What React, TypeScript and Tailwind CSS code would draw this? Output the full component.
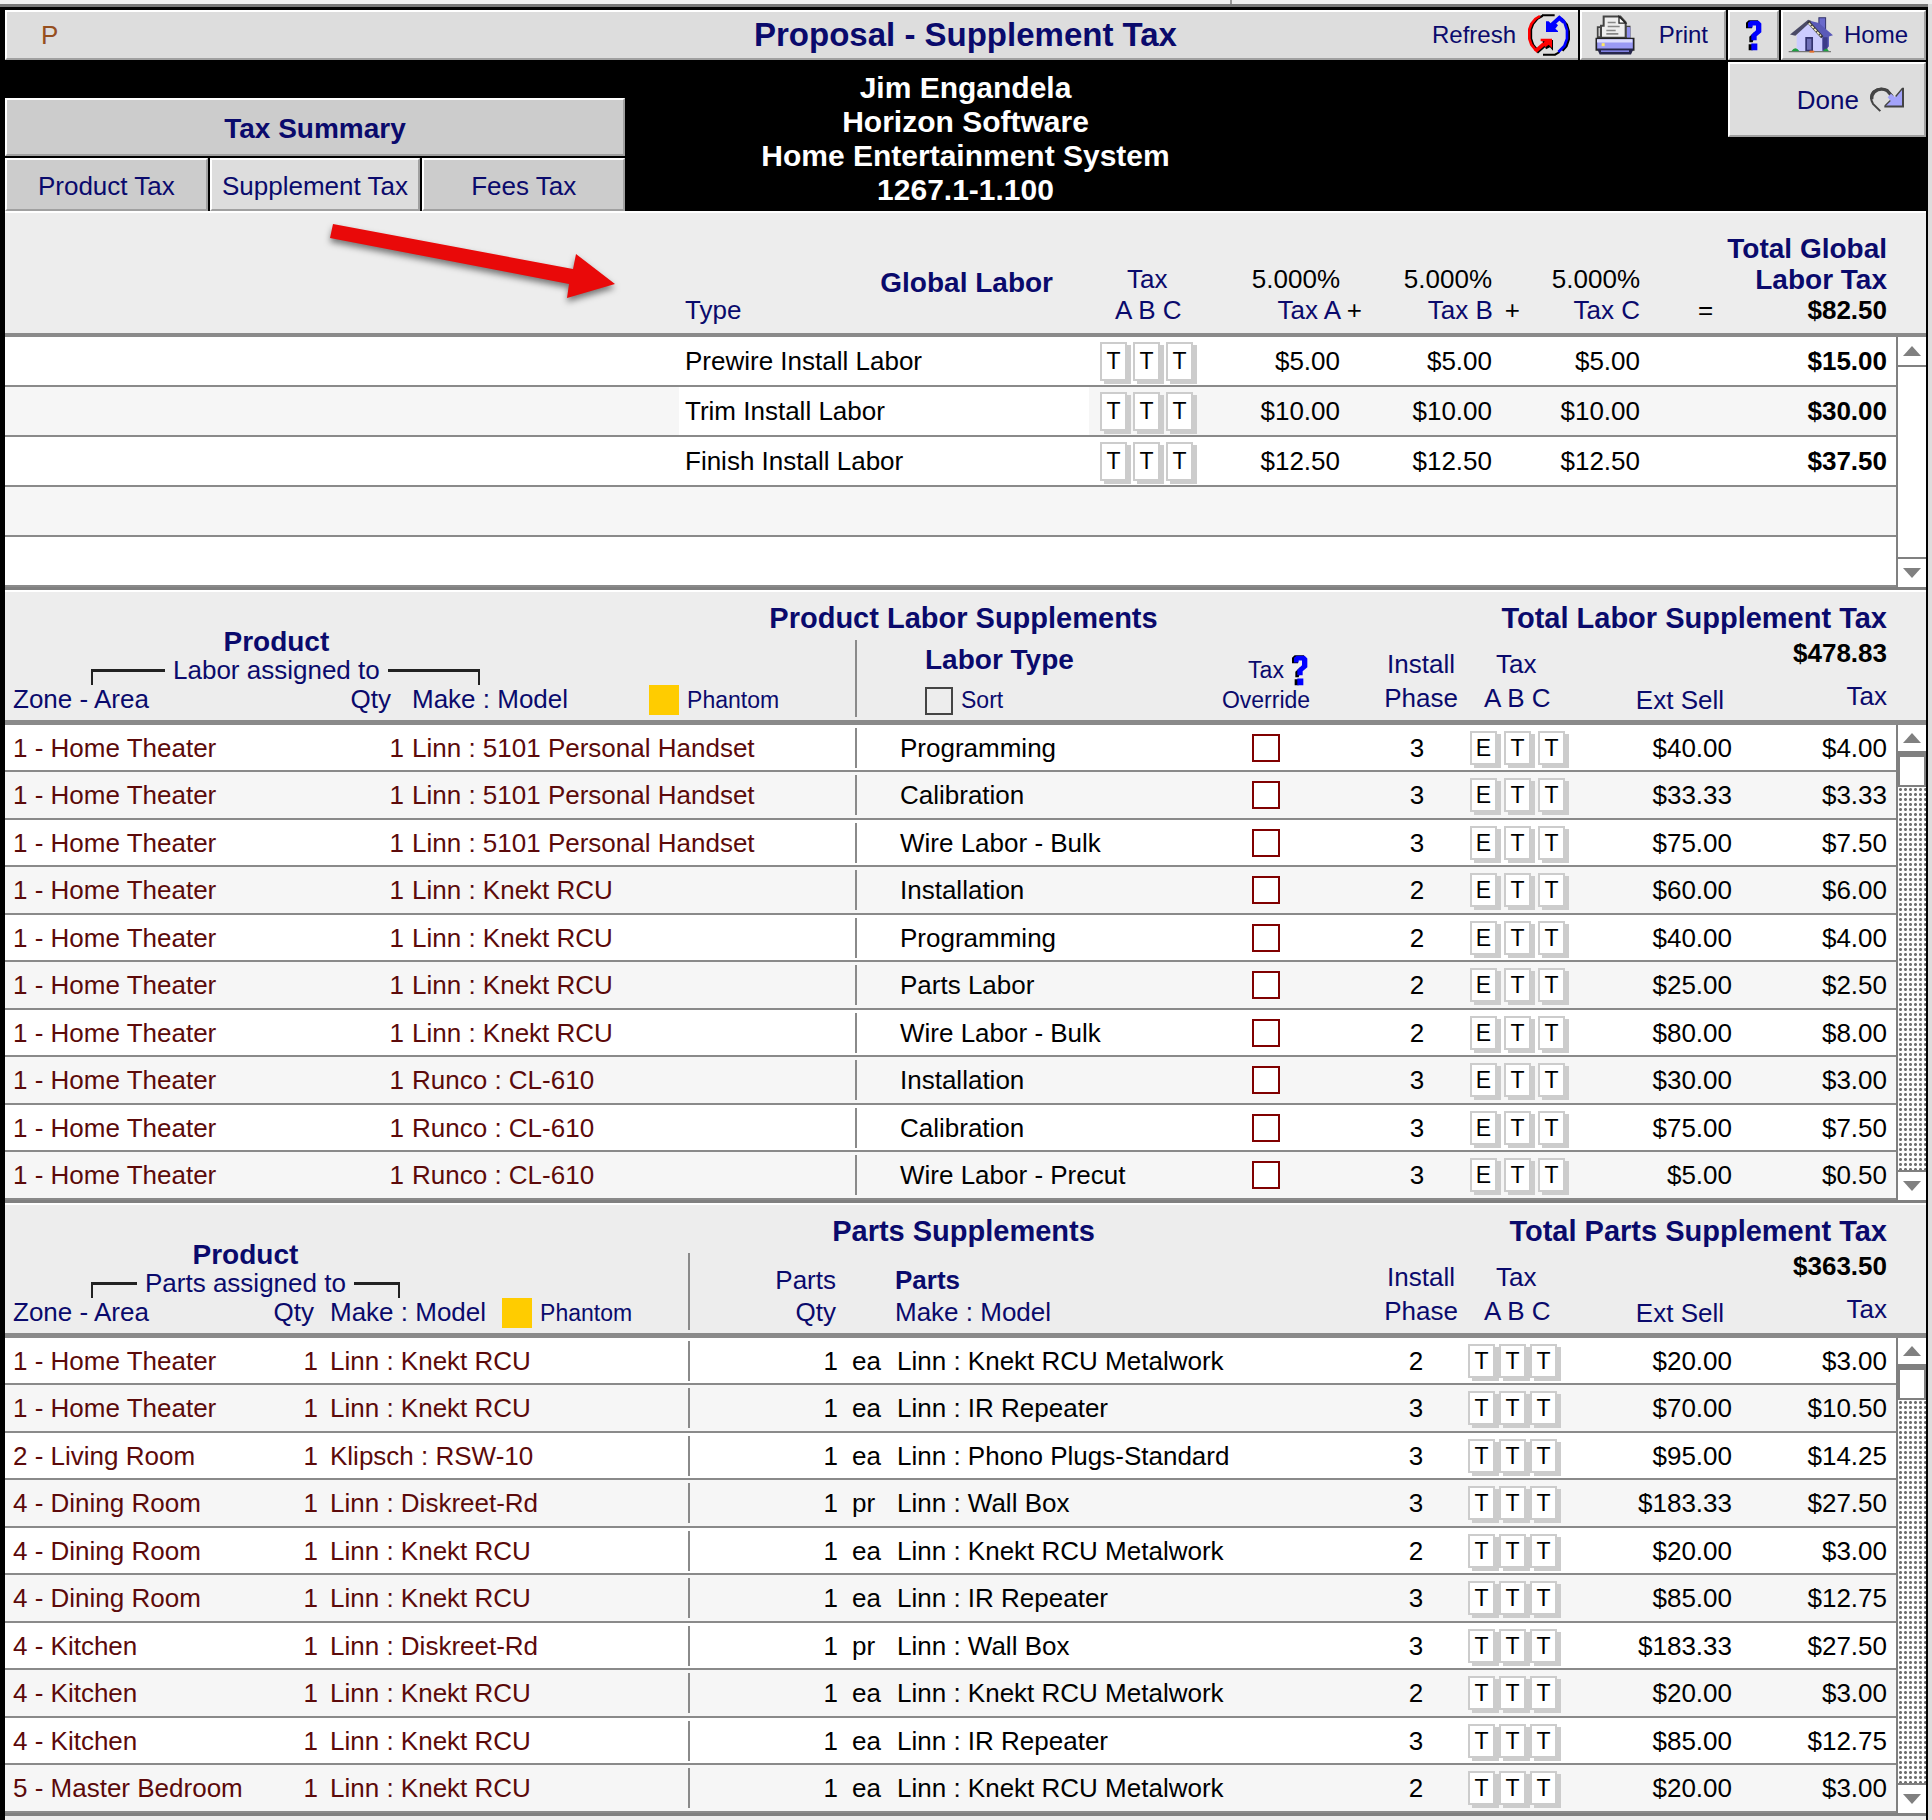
import clsx from 'clsx';
import React, { useState } from 'react';

interface GlobalLabor {
  type: string;
  amount: string;
  total: string;
}

interface LaborSupplement {
  zone: string;
  model: string;
  labor: string;
  phase: number;
  sell: string;
  tax: string;
}

interface PartsSupplement {
  zone: string;
  model: string;
  unit: string;
  part: string;
  phase: number;
  sell: string;
  tax: string;
}

const globalLabor: GlobalLabor[] = [
  { type: 'Prewire Install Labor', amount: '$5.00', total: '$15.00' },
  { type: 'Trim Install Labor', amount: '$10.00', total: '$30.00' },
  { type: 'Finish Install Labor', amount: '$12.50', total: '$37.50' },
];

const HT = '1 - Home Theater';
const HANDSET = 'Linn : 5101 Personal Handset';
const RCU = 'Linn : Knekt RCU';
const RUNCO = 'Runco : CL-610';
const METALWORK = 'Linn : Knekt RCU Metalwork';

const laborSupplements: LaborSupplement[] = [
  { zone: HT, model: HANDSET, labor: 'Programming', phase: 3, sell: '$40.00', tax: '$4.00' },
  { zone: HT, model: HANDSET, labor: 'Calibration', phase: 3, sell: '$33.33', tax: '$3.33' },
  { zone: HT, model: HANDSET, labor: 'Wire Labor - Bulk', phase: 3, sell: '$75.00', tax: '$7.50' },
  { zone: HT, model: RCU, labor: 'Installation', phase: 2, sell: '$60.00', tax: '$6.00' },
  { zone: HT, model: RCU, labor: 'Programming', phase: 2, sell: '$40.00', tax: '$4.00' },
  { zone: HT, model: RCU, labor: 'Parts Labor', phase: 2, sell: '$25.00', tax: '$2.50' },
  { zone: HT, model: RCU, labor: 'Wire Labor - Bulk', phase: 2, sell: '$80.00', tax: '$8.00' },
  { zone: HT, model: RUNCO, labor: 'Installation', phase: 3, sell: '$30.00', tax: '$3.00' },
  { zone: HT, model: RUNCO, labor: 'Calibration', phase: 3, sell: '$75.00', tax: '$7.50' },
  { zone: HT, model: RUNCO, labor: 'Wire Labor - Precut', phase: 3, sell: '$5.00', tax: '$0.50' },
];

const partsSupplements: PartsSupplement[] = [
  { zone: HT, model: RCU, unit: 'ea', part: METALWORK, phase: 2, sell: '$20.00', tax: '$3.00' },
  { zone: HT, model: RCU, unit: 'ea', part: 'Linn : IR Repeater', phase: 3, sell: '$70.00', tax: '$10.50' },
  { zone: '2 - Living Room', model: 'Klipsch : RSW-10', unit: 'ea', part: 'Linn : Phono Plugs-Standard', phase: 3, sell: '$95.00', tax: '$14.25' },
  { zone: '4 - Dining Room', model: 'Linn : Diskreet-Rd', unit: 'pr', part: 'Linn : Wall Box', phase: 3, sell: '$183.33', tax: '$27.50' },
  { zone: '4 - Dining Room', model: RCU, unit: 'ea', part: METALWORK, phase: 2, sell: '$20.00', tax: '$3.00' },
  { zone: '4 - Dining Room', model: RCU, unit: 'ea', part: 'Linn : IR Repeater', phase: 3, sell: '$85.00', tax: '$12.75' },
  { zone: '4 - Kitchen', model: 'Linn : Diskreet-Rd', unit: 'pr', part: 'Linn : Wall Box', phase: 3, sell: '$183.33', tax: '$27.50' },
  { zone: '4 - Kitchen', model: RCU, unit: 'ea', part: METALWORK, phase: 2, sell: '$20.00', tax: '$3.00' },
  { zone: '4 - Kitchen', model: RCU, unit: 'ea', part: 'Linn : IR Repeater', phase: 3, sell: '$85.00', tax: '$12.75' },
  { zone: '5 - Master Bedroom', model: RCU, unit: 'ea', part: METALWORK, phase: 2, sell: '$20.00', tax: '$3.00' },
];

const bevel = 'border-2 border-t-white border-l-white border-r-[#a0a0a0] border-b-[#a0a0a0]';
const tableClass = 'min-w-0 flex-1 table-fixed border-separate border-spacing-0 whitespace-nowrap';
const rowClass =
  'odd:h-[47px] odd:bg-white even:h-[48px] even:bg-[#f6f6f6] *:border-b-2 *:border-[#8a8a8a]';

const RefreshIcon = () => (
  <svg className="h-[42px] w-[42px]" viewBox="0 0 126 126" fill="none" aria-hidden="true">
    <path d="M44 5 28 14 15 30 9 46v28l6 18 13 17" stroke="#000" strokeWidth="7" />
    <path d="M36 6 22 15 10 30 4 46v28l6 18 14 17" stroke="#f00" strokeWidth="8" />
    <path d="M26 114 56 88" stroke="#000" strokeWidth="12" />
    <path d="M22 112 54 84" stroke="#f00" strokeWidth="11" />
    <path d="M42 78h33v32l-9-10-12 6z" fill="#000" />
    <path d="M38 74h34v28l-10-10-10 8-8-10 6-8H38z" fill="#f00" />
    <path d="M42 4h38M45 122h36l14-8" stroke="#000" strokeWidth="6" />
    <path d="m100 14 16 18 6 20v24l-7 20-12 14" stroke="#000" strokeWidth="8" />
    <path d="m93 10 16 14 8 24v26l-8 22-18 18" stroke="#00f" strokeWidth="8" />
    <path d="M108 24 94 12 70 34" stroke="#00f" strokeWidth="12" />
    <path d="M54 22h8l10 10 8-8 10 10-8 10 8 7v3H54z" fill="#00f" />
  </svg>
);

const PrinterIcon = () => (
  <svg className="h-[41px] w-10" viewBox="0 0 120 122" aria-hidden="true">
    <path d="M8 36h14v30H8zM92 34h12v34H92z" fill="#c9c9c9" stroke="#444" strokeWidth="5" />
    <path d="M96 36h10v32H96z" fill="#8f8ff0" />
    <path d="M26 4h50l16 18v46H18V32h8z" fill="#eee" stroke="#444" strokeWidth="6" />
    <path d="M72 4v20h20z" fill="#fff" stroke="#222" strokeWidth="4" />
    <path d="M38 22h24M38 34h36M34 46h28M34 56h36" stroke="#888" strokeWidth="5" />
    <path d="M4 70h112v34H4z" fill="#9a9af5" stroke="#222" strokeWidth="5" />
    <path d="M6 72h106v10H6z" fill="#dcdcff" />
    <path d="M20 84h9v9h-9z" fill="#ffe860" />
    <path d="M6 100h110l-8 18H14z" fill="#26264a" />
    <path d="M18 108h84" stroke="#8080e0" strokeWidth="5" />
  </svg>
);

const HelpIcon = () => (
  <svg className="h-[31px] w-4" viewBox="0 0 48 92" aria-hidden="true">
    <path d="M0 24V8l8-8h28v8H18v16H0zM10 66V50l14-14v18l-4 12zM8 72h12v18H8z" fill="#000" />
    <path d="M6 18V8l8-6h24l8 8v26L32 48v12H16V44l14-14V16H20v6H6zM16 70h18v20H16z" fill="#00f" />
  </svg>
);

const HomeIcon = () => (
  <svg className="h-9 w-[46px]" viewBox="0 0 137 107" aria-hidden="true">
    <path d="M92 2h20v38H92z" fill="#6a6acb" stroke="#33336b" strokeWidth="3" />
    <path d="m62 10 30 8 42 36-12 4v30l-18 14-12-44z" fill="#5a5ab8" />
    <path d="M102 60h16v34l-16 8z" fill="#3c3c8a" />
    <path d="M26 52 62 16l40 42v44H26z" fill="#ccccff" />
    <path d="M6 52 60 8l10 4-48 44z" fill="#4a4a66" />
    <path d="m60 14 42 46" stroke="#333" strokeWidth="9" />
    <path d="m62 18 36 38" stroke="#eee8c0" strokeWidth="5" strokeDasharray="9 3" />
    <path d="M54 62h18v38H54z" fill="#7070b8" stroke="#333370" strokeWidth="5" />
    <path d="M2 103h126" stroke="#777" strokeWidth="4" />
    <path d="M10 102q12-18 24 0zM104 102q10-16 18 0z" fill="#1fa040" />
    <path d="M64 100h14v6H64z" fill="#e8702a" />
  </svg>
);

const DoneIcon = () => (
  <svg className="h-[26px] w-[35px]" viewBox="0 0 105 77" fill="none" aria-hidden="true">
    <path d="M34 72 12 50q-12-22 0-36 20-16 44-4l16 20" stroke="#444" strokeWidth="6" />
    <path d="M8 36q0-14 8-22 18-14 38-4l16 18" stroke="#444" strokeWidth="10" />
    <path d="M102 4v54H46l18-18-8-10 10-10 12 10z" fill="#a3a3fa" />
    <path d="M102 2v56H46" stroke="#444" strokeWidth="6" />
    <path d="m48 56 16-16M80 28 100 4" stroke="#444" strokeWidth="4" />
  </svg>
);

const TaxFlags: React.FC<{ flags: string; className: string; tall?: boolean }> = ({
  flags,
  className,
  tall,
}) => (
  <div className={clsx('flex', className)}>
    {flags.split('').map((flag, i) => (
      <button
        key={i}
        className={clsx(
          'flex w-[27px] items-center justify-center border-2 border-[#ccc] bg-white text-[23px] shadow-[4px_3px_0_#ccc]',
          tall ? 'leading-[35px]' : 'leading-[30px]',
        )}
      >
        {flag}
      </button>
    ))}
  </div>
);

const ScrollBar: React.FC<{ active?: boolean }> = ({ active }) => (
  <div className="flex w-[30px] flex-col border-l-2 border-[#808080] bg-white">
    <button
      aria-label="Scroll up"
      className={clsx(
        'flex h-[30px] items-center justify-center border-[#808080]',
        active ? 'border-b-4' : 'border-b-2',
      )}
    >
      <svg className="h-3 w-[18px]" viewBox="0 0 18 12" aria-hidden="true">
        <path d="M9 1l9 10H0z" fill="#808080" />
      </svg>
    </button>
    {active && <div className="h-8 border-2 border-[#808080] bg-white" />}
    <div
      className={clsx(
        'flex-1',
        active &&
          'bg-[radial-gradient(#707070_1px,transparent_2px)] bg-[length:5px_5px]',
      )}
    />
    <button
      aria-label="Scroll down"
      className="flex h-[30px] items-center justify-center border-t-2 border-[#808080]"
    >
      <svg className="h-3 w-[18px]" viewBox="0 0 18 12" aria-hidden="true">
        <path d="M9 11l9-10H0z" fill="#808080" />
      </svg>
    </button>
  </div>
);

const Divider: React.FC<{ className: string }> = ({ className }) => (
  <span className={clsx('w-0.5 shrink-0 bg-[#8a8a8a]', className)} />
);

const SectionTitle: React.FC<{ id: string; title: string; total: string }> = ({
  id,
  title,
  total,
}) => (
  <div className="grid grid-cols-[1fr_auto_1fr] pt-3 text-[29px] leading-7 font-bold">
    <h2 id={id} className="col-start-2 pr-1">
      {title}
    </h2>
    <div className="pr-[39px] text-right">{total}</div>
  </div>
);

// "Product / Labor assigned to" caption with the bracket over the product columns
const AssignedTo: React.FC<{ label: string; leftWidth: string; rightWidth: string }> = ({
  label,
  leftWidth,
  rightWidth,
}) => (
  <div className="flex items-end pl-[86px]">
    <span className={clsx('h-4 border-t-3 border-l-2 border-[#222]', leftWidth)} />
    <div className="px-2 text-center">
      <div className="text-[28px] font-bold">Product</div>
      <div>{label}</div>
    </div>
    <span className={clsx('h-4 border-t-3 border-r-2 border-[#222]', rightWidth)} />
  </div>
);

const Phantom: React.FC<{ className: string }> = ({ className }) => (
  <span className={clsx('flex items-center gap-2', className)}>
    <span className="h-[30px] w-[30px] bg-[#ffcc00]" />
    <span className="text-[23px]">Phantom</span>
  </span>
);

// Install phase, tax flags, extended sell and tax headings shared by both supplement lists
const AmountHeadings: React.FC<{ total: string }> = ({ total }) => (
  <>
    <div className="pl-2 text-center leading-[34px]">
      Install
      <br />
      Phase
    </div>
    <div className="pl-[14px] leading-[34px]">
      <div className="pl-3">Tax</div>A B C
    </div>
    <div className="pr-2 text-right">Ext Sell</div>
    <div className="pb-1 text-right">
      <div className="mb-[14px] font-bold text-black">{total}</div>
      Tax
    </div>
    <div />
  </>
);

const Toolbar = () => (
  <div className={clsx('grid grid-cols-[1fr_auto_1fr] items-stretch bg-[#ddd] text-[24px]', bevel)}>
    <div className="flex items-center pl-[34px] text-[26px] text-[#964f1e]">P</div>
    <h1 className="flex items-center text-[33px] leading-[46px] font-bold">
      Proposal - Supplement Tax
    </h1>
    <div className="-my-0.5 -mr-0.5 flex justify-end">
      <button className="flex items-center gap-3 pr-2">
        Refresh
        <RefreshIcon />
      </button>
      <div className="flex gap-0.5 bg-black pl-0.5">
        <button className={clsx('flex w-[146px] items-center justify-between bg-[#ddd] pr-4 pl-[13px]', bevel)}>
          <PrinterIcon />
          Print
        </button>
        <button
          aria-label="Help"
          className={clsx('flex w-[51px] items-center justify-center bg-[#ddd]', bevel)}
        >
          <HelpIcon />
        </button>
        <button className={clsx('flex w-[145px] items-center justify-between bg-[#ddd] pr-4 pl-[5px]', bevel)}>
          <HomeIcon />
          Home
        </button>
      </div>
    </div>
  </div>
);

const tabs = ['Product Tax', 'Supplement Tax', 'Fees Tax'];

const JobHeader = () => {
  const [activeTab, setActiveTab] = useState('Supplement Tax');

  return (
    <div className="grid grid-cols-[1fr_auto_1fr]">
      <div className="w-[620px] self-end">
        <div className={clsx('mb-0.5 bg-[#ccc] pt-1 text-center text-[28px] leading-[50px] font-bold', bevel)}>
          Tax Summary
        </div>
        <nav className="grid grid-cols-[204fr_212fr_204fr] gap-0.5">
          {tabs.map((tab) => (
            <button
              key={tab}
              onClick={() => setActiveTab(tab)}
              className={clsx(
                'pt-1 leading-[45px] whitespace-nowrap',
                bevel,
                tab === activeTab ? 'bg-[#ddd]' : 'bg-[#ccc]',
              )}
            >
              {tab}
            </button>
          ))}
        </nav>
      </div>
      <div className="pt-[11px] pb-1 text-center text-[30px] leading-[34px] font-bold text-white">
        <div>Jim Engandela</div>
        <div>Horizon Software</div>
        <div>Home Entertainment System</div>
        <div>1267.1-1.100</div>
      </div>
      <div className="flex items-start justify-end pt-0.5">
        <button
          className={clsx('flex h-[75px] w-[198px] items-center justify-end gap-[10px] bg-[#ddd] pr-5', bevel)}
        >
          Done
          <DoneIcon />
        </button>
      </div>
    </div>
  );
};

const GlobalLaborSection = () => (
  <section className="relative border-b-3 border-[#808080]">
    <div className="grid grid-cols-[1fr_410px_110px_141px_152px_148px_247px_39px] items-end border-t-2 border-b-4 border-t-white border-b-[#8a8a8a] bg-[#ededed] pt-5 pb-[7px] leading-[31px] whitespace-nowrap">
      <div />
      <div className="flex items-end justify-between pr-9 pl-[6px]">
        <span>Type</span>
        <h2 id="global-labor" className="mb-7 text-[28px] font-bold">
          Global Labor
        </h2>
      </div>
      <div className="pl-[26px]">
        <div className="pl-3">Tax</div>A B C
      </div>
      <div className="flex flex-col items-end">
        <span className="text-black">5.000%</span>
        <span className="-mr-[22px]">
          Tax A <span className="text-black">+</span>
        </span>
      </div>
      <div className="flex flex-col items-end">
        <span className="text-black">5.000%</span>
        <span className="-mr-[28px] flex gap-3">
          Tax B <span className="text-black">+</span>
        </span>
      </div>
      <div className="text-right">
        <div className="text-black">5.000%</div>
        Tax C
      </div>
      <div className="flex items-end justify-between pl-[58px]">
        <span className="text-black">=</span>
        <div className="-ml-10 text-right text-[28px] font-bold">
          Total Global
          <br />
          Labor Tax
          <div className="text-[26px] text-black">$82.50</div>
        </div>
      </div>
      <div />
    </div>

    <div className="flex">
      <table aria-labelledby="global-labor" className={tableClass}>
        <colgroup>
          <col />
          <col className="w-[410px]" />
          <col className="w-[110px]" />
          <col className="w-[141px]" />
          <col className="w-[152px]" />
          <col className="w-[148px]" />
          <col className="w-[256px]" />
        </colgroup>
        <tbody>
          {Array.from({ length: 5 }, (_, i) => globalLabor[i]).map((row, i) => (
            <tr
              key={i}
              className="h-[50px] odd:bg-white even:bg-[#f6f6f6] *:border-b-2 *:border-[#8a8a8a]"
            >
              <td />
              <td className={clsx('pl-[6px]', row && 'bg-white')}>{row?.type}</td>
              <td className="pl-[11px]">
                {row && <TaxFlags flags="TTT" className="gap-[6px]" tall />}
              </td>
              <td className="text-right">{row?.amount}</td>
              <td className="text-right">{row?.amount}</td>
              <td className="text-right">{row?.amount}</td>
              <td className="pr-[9px] text-right font-bold">{row?.total}</td>
            </tr>
          ))}
        </tbody>
      </table>
      <ScrollBar />
    </div>

    {/* Callout arrow */}
    <svg
      className="pointer-events-none absolute top-2 left-[319px] h-[90px] w-[300px] drop-shadow-[0_4px_3px_rgba(0,0,0,0.5)]"
      viewBox="324 218 300 90"
      aria-hidden="true"
    >
      <path d="M333 223l240 45 3-15 39 30-48 14 2-14-239-46z" fill="#e90909" />
    </svg>
  </section>
);

const LaborSection = () => (
  <section className="border-b-3 border-[#808080]">
    <div className="border-t-2 border-b-5 border-t-white border-b-[#8a8a8a] bg-[#ededed] whitespace-nowrap">
      <SectionTitle
        id="labor-supplements"
        title="Product Labor Supplements"
        total="Total Labor Supplement Tax"
      />
      <div className="-mt-[5px] grid grid-cols-[1fr_345px_164px_106px_110px_152px_155px_39px] items-end pb-[5px] leading-[29px]">
        <div>
          <AssignedTo label="Labor assigned to" leftWidth="w-[74px]" rightWidth="w-[92px]" />
          <div className="grid grid-cols-[1fr_60px_451px]">
            <span className="pl-2">Zone - Area</span>
            <span className="pr-[13px] text-right">Qty</span>
            <span className="flex pl-2">
              Make : Model
              <Phantom className="ml-[81px]" />
            </span>
          </div>
        </div>
        <div className="flex items-end">
          <Divider className="mb-[-2px] h-[77px]" />
          <div className="pl-[68px]">
            <div className="mb-3 text-[28px] font-bold">Labor Type</div>
            <label className="flex items-center gap-2 text-[23px]">
              <input
                type="checkbox"
                className="h-7 w-7 appearance-none border-2 border-[#444] bg-[#ededed]"
              />
              Sort
            </label>
          </div>
        </div>
        <div className="pr-8 text-center text-[23px]">
          <div className="flex items-center justify-center gap-2 pl-6">
            Tax
            <HelpIcon />
          </div>
          Override
        </div>
        <AmountHeadings total="$478.83" />
      </div>
    </div>

    <div className="flex">
      <table aria-labelledby="labor-supplements" className={tableClass}>
        <colgroup>
          <col />
          <col className="w-[60px]" />
          <col className="w-[451px]" />
          <col className="w-[345px]" />
          <col className="w-[164px]" />
          <col className="w-[106px]" />
          <col className="w-[110px]" />
          <col className="w-[152px]" />
          <col className="w-[164px]" />
        </colgroup>
        <tbody>
          {laborSupplements.map((row, i) => (
            <tr key={i} className={rowClass}>
              <td className="pl-2 text-[#5c0a0a]">{row.zone}</td>
              <td className="text-right text-[#5c0a0a]">1</td>
              <td className="pl-2 text-[#5c0a0a]">{row.model}</td>
              <td>
                <div className="flex items-center">
                  <Divider className="mr-[43px] h-10" />
                  {row.labor}
                </div>
              </td>
              <td className="pr-8">
                <input
                  type="checkbox"
                  aria-label="Tax Override"
                  className="mx-auto block h-7 w-7 appearance-none border-2 border-[#800000] bg-white"
                />
              </td>
              <td className="text-center">{row.phase}</td>
              <td>
                <TaxFlags flags="ETT" className="gap-[7px]" />
              </td>
              <td className="text-right">{row.sell}</td>
              <td className="pr-[9px] text-right">{row.tax}</td>
            </tr>
          ))}
        </tbody>
      </table>
      <ScrollBar active />
    </div>
  </section>
);

const PartsSection = () => (
  <section className="border-b-3 border-[#808080]">
    <div className="border-t-2 border-b-5 border-t-white border-b-[#8a8a8a] bg-[#ededed] whitespace-nowrap">
      <SectionTitle
        id="parts-supplements"
        title="Parts Supplements"
        total="Total Parts Supplement Tax"
      />
      <div className="-mt-[5px] grid grid-cols-[1fr_150px_526px_106px_110px_152px_155px_39px] items-end pb-[5px] leading-[29px]">
        <div>
          <AssignedTo label="Parts assigned to" leftWidth="w-[46px]" rightWidth="w-[46px]" />
          <div className="grid grid-cols-[1fr_60px_370px]">
            <span className="pl-2">Zone - Area</span>
            <span className="pr-1 text-right">Qty</span>
            <span className="flex pl-3">
              Make : Model
              <Phantom className="ml-4" />
            </span>
          </div>
        </div>
        <div className="flex items-end justify-between">
          <Divider className="mb-[-2px] h-[77px]" />
          <div className="pr-[2px] text-right leading-8">
            Parts
            <br />
            Qty
          </div>
        </div>
        <div className="pl-[57px] leading-8">
          <div className="font-bold">Parts</div>
          Make : Model
        </div>
        <AmountHeadings total="$363.50" />
      </div>
    </div>

    <div className="flex">
      <table aria-labelledby="parts-supplements" className={tableClass}>
        <colgroup>
          <col />
          <col className="w-[60px]" />
          <col className="w-[370px]" />
          <col className="w-[150px]" />
          <col className="w-[59px]" />
          <col className="w-[467px]" />
          <col className="w-[104px]" />
          <col className="w-[112px]" />
          <col className="w-[152px]" />
          <col className="w-[164px]" />
        </colgroup>
        <tbody>
          {partsSupplements.map((row, i) => (
            <tr key={i} className={rowClass}>
              <td className="pl-2 text-[#5c0a0a]">{row.zone}</td>
              <td className="text-right text-[#5c0a0a]">1</td>
              <td className="pl-3 text-[#5c0a0a]">{row.model}</td>
              <td>
                <div className="flex items-center justify-between">
                  <Divider className="h-10" />1
                </div>
              </td>
              <td className="pl-[14px]">{row.unit}</td>
              <td>{row.part}</td>
              <td className="text-center">{row.phase}</td>
              <td>
                <TaxFlags flags="TTT" className="gap-1" />
              </td>
              <td className="text-right">{row.sell}</td>
              <td className="pr-[9px] text-right">{row.tax}</td>
            </tr>
          ))}
        </tbody>
      </table>
      <ScrollBar active />
    </div>
  </section>
);

export default function App() {
  return (
    <div className="bg-[#ddd] font-['Liberation_Sans',Arial,sans-serif] text-[26px] leading-[30px] text-black">
      <div className="h-1 bg-[#eee]">
        <div className="h-full w-[1232px] border-r-2 border-[#999]" />
      </div>
      <div className="mr-1 border-t-3 border-[#777] bg-black pt-[3px] pr-0.5 pl-[5px] text-[#0a0a6c]">
        <Toolbar />
        <JobHeader />
        <div className="text-black [&_section>div:first-child]:text-[#0a0a6c]">
          <GlobalLaborSection />
          <LaborSection />
          <PartsSection />
        </div>
        <div className="h-1 bg-[#eee]" />
      </div>
    </div>
  );
}
